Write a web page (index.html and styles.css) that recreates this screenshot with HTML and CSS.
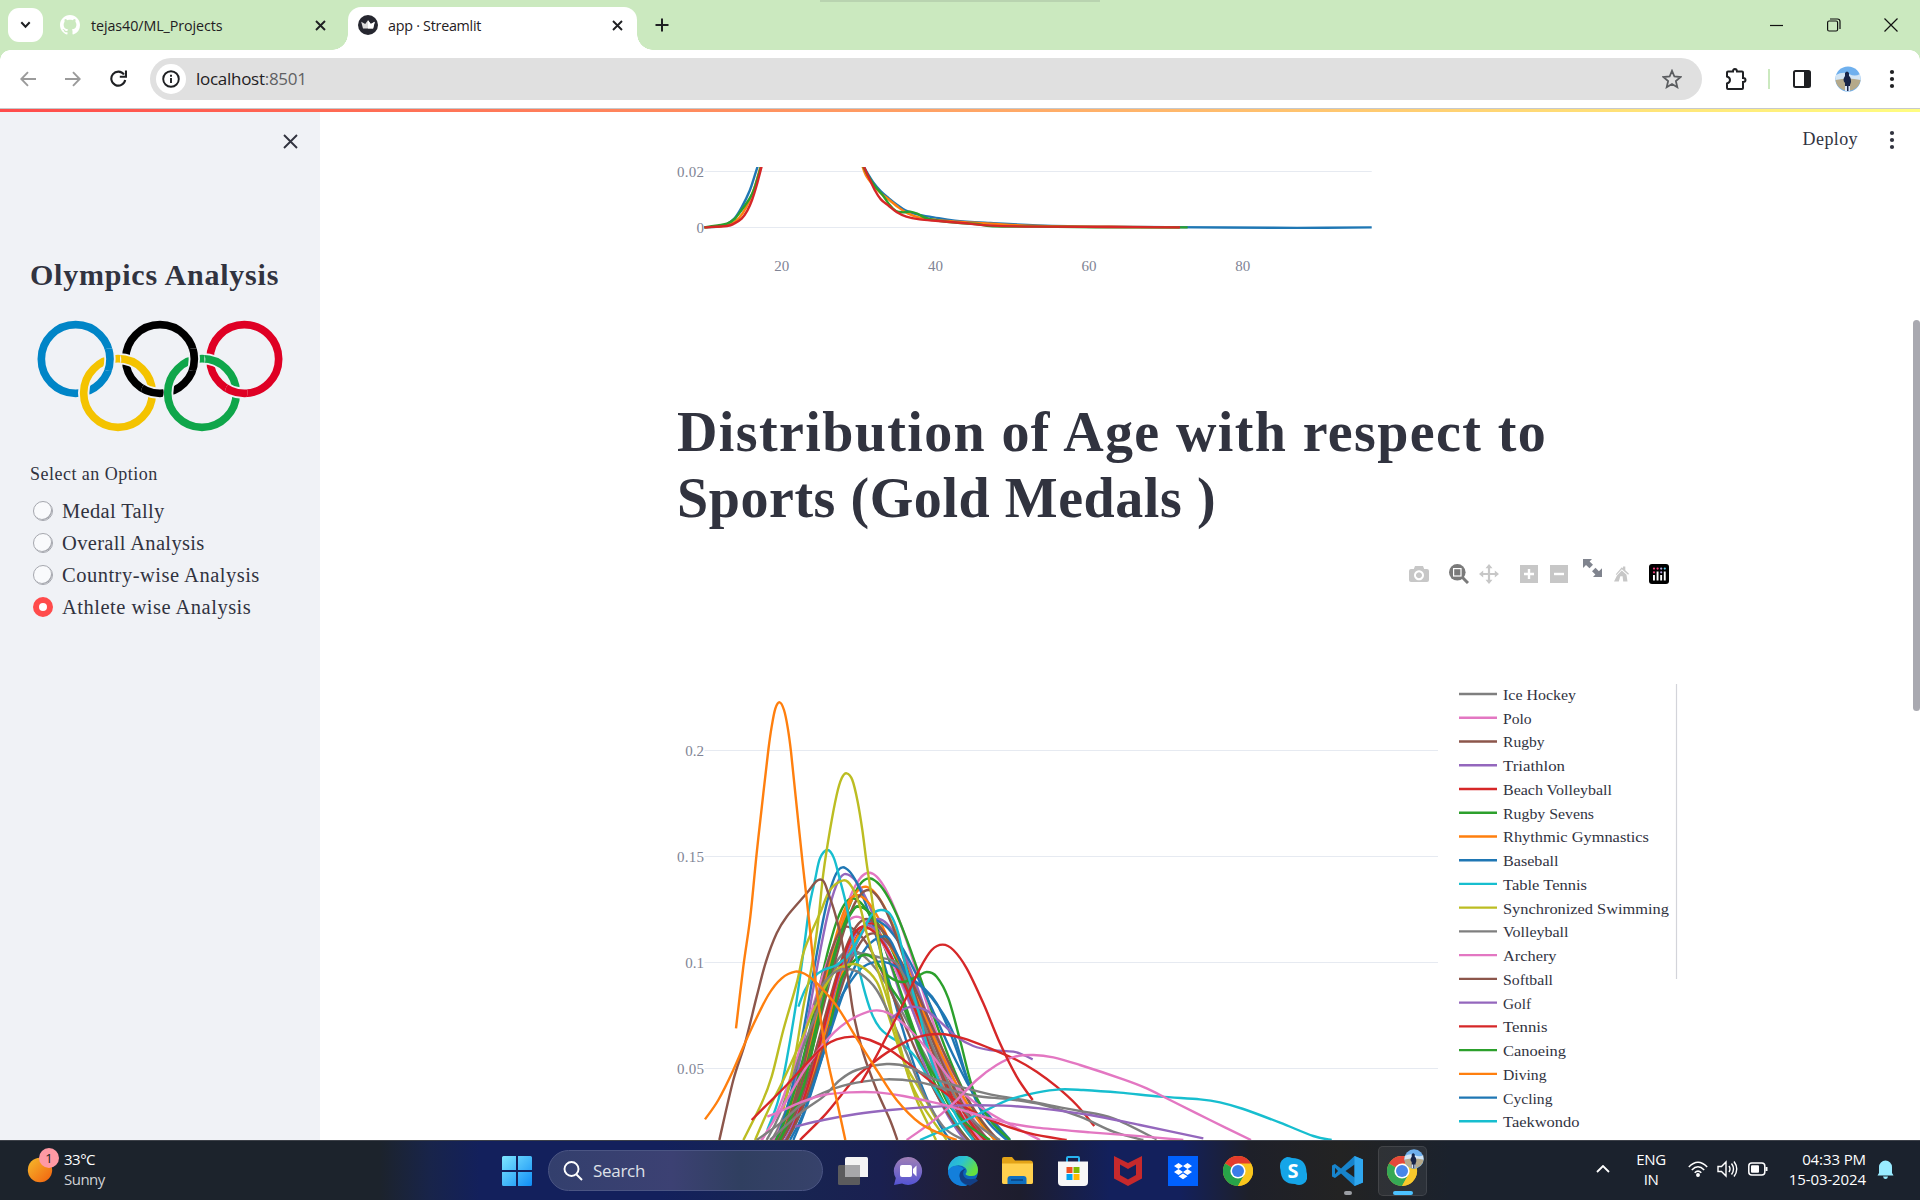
FILE: index.html
```html
<!DOCTYPE html>
<html lang="en">
<head>
<meta charset="utf-8">
<title>app · Streamlit</title>
<link rel="stylesheet" href="styles.css">
</head>
<body>
<svg class="defs" width="0" height="0">
  <defs>
    <g id="x"><path d="M1 1 10 10M10 1 1 10" fill="none" stroke="currentColor" stroke-width="1.9"/></g>
    <g id="dots" fill="currentColor"><circle cx="3" cy="3" r="2.1"/><circle cx="3" cy="10" r="2.1"/><circle cx="3" cy="17" r="2.1"/></g>
    <g id="photo"><circle cx="13" cy="13" r="12.6" fill="#6fb0ee"/><path d="M1 9Q8 5 14 8T25 8L25.5 14H.5z" fill="#d3e5f4"/><path d="M.5 14Q13 11 25.5 14A12.6 12.6 0 0 1 .5 14z" fill="#b5a98a"/><path d="M10 7q2-3 4 0v3q2 1 2 6l-1 3v6h-5v-8q-3-3 0-7z" fill="#172448"/><path d="M10 20h2v5h-2zM13.5 20h1.5v5h-1.5z" fill="#dce7f7"/></g>
    <g id="chrome"><circle cx="15" cy="15" r="15" fill="#f9bc15"/><path d="M15 15 2 7.5A15 15 0 0 1 28 7.500z" fill="#e43b2c"/><path d="M15 15 2 7.500A15 15 0 0 0 15 30L21.500 18.500z" fill="#27a349"/><path d="M15 7.500H28A15 15 0 0 1 15 30L21.500 18.500z" fill="#f9c51d"/><circle cx="15" cy="15" r="7.600" fill="#fff"/><circle cx="15" cy="15" r="6" fill="#3b7de8"/></g>
  </defs>
</svg>

<header class="tabs">
  <button class="tab-search"><svg width="11" height="8" viewBox="0 0 11 8"><path d="M1.300 1.300 5.500 5.800 9.700 1.300" fill="none" stroke="#1f2023" stroke-width="2"/></svg></button>
  <div class="tab idle">
    <svg width="20" height="20" viewBox="0 0 16 16"><path fill="#fff" d="M8 0C3.580 0 0 3.580 0 8c0 3.540 2.290 6.530 5.470 7.590.4.070.550-.170.550-.380 0-.190-.010-.820-.010-1.490-2.010.370-2.530-.490-2.690-.940-.090-.230-.480-.940-.820-1.130-.280-.150-.680-.520-.010-.530.630-.010 1.080.580 1.230.820.720 1.210 1.870.870 2.330.660.070-.520.280-.870.510-1.070-1.780-.2-3.640-.890-3.640-3.950 0-.870.310-1.590.820-2.150-.080-.2-.360-1.020.080-2.120 0 0 .670-.210 2.200.820.640-.180 1.320-.270 2-.270s1.360.090 2 .270c1.530-1.040 2.200-.820 2.200-.820.440 1.100.160 1.920.080 2.120.510.560.820 1.270.820 2.150 0 3.070-1.870 3.750-3.650 3.950.290.250.540.730.540 1.480 0 1.070-.010 1.930-.010 2.200 0 .210.150.460.550.380A8.010 8.010 0 0 0 16 8c0-4.420-3.580-8-8-8z"/></svg>
    <span class="tab-name">tejas40/ML_Projects</span>
    <svg class="shut" width="11" height="11"><use href="#x"/></svg>
  </div>
  <div class="tab active">
    <svg width="20" height="20" viewBox="0 0 20 20"><circle cx="10" cy="10" r="10" fill="#262730"/><path d="M3.200 6.700 7.200 9 10 5.300 12.800 9l4-2.300-1.700 6.700H5z" fill="#ddd"/><path d="M10 5.300 12.800 9l4-2.300-1.700 6.700H10z" fill="#fff"/></svg>
    <span class="tab-name">app · Streamlit</span>
    <svg class="shut" width="11" height="11"><use href="#x"/></svg>
  </div>
  <svg class="plus" width="14" height="14"><path d="M7 .5v13M.5 7h13" stroke="#1f2023" stroke-width="2"/></svg>
  <div class="strip"></div>
  <div class="win">
    <svg width="14" height="14"><path d="M0 7.500h13" stroke="#111" stroke-width="1.200"/></svg>
    <svg width="14" height="14" fill="none" stroke="#111" stroke-width="1.200"><rect x=".6" y="3" width="10" height="10" rx="1.500"/><path d="M3 1h7.500q2.500 0 2.500 2.500V11"/></svg>
    <svg width="14" height="14"><path d="M.5.5l13 13M13.500.5l-13 13" stroke="#111" stroke-width="1.200"/></svg>
  </div>
</header>

<nav class="toolbar">
  <div class="nav-buttons">
    <svg width="16" height="16" fill="none" stroke="#9b9b9b" stroke-width="1.900"><path d="M16 8H1.500M8 1.200 1.300 8 8 14.800"/></svg>
    <svg width="16" height="16" fill="none" stroke="#9b9b9b" stroke-width="1.900"><path d="M0 8h14.500M8 1.200 14.700 8 8 14.800"/></svg>
    <svg width="17" height="17" fill="none" stroke="#1f2023" stroke-width="2.100"><path d="M14 4.500A7 7 0 1 0 15.200 10"/><path d="M16 .5v6.300H9.800" /></svg>
  </div>
  <div class="omnibox">
    <span class="info"><svg width="18" height="18" fill="none" stroke="#1f2023" stroke-width="1.900"><circle cx="9" cy="9" r="7.800"/><path d="M9 8v5M9 4.800v2"/></svg></span>
    <span class="url">localhost<i>:8501</i></span>
    <svg class="star" width="20" height="20" viewBox="0 0 20 20"><path d="M10 1.800l2.400 5.700 6.200.5-4.700 4.100 1.400 6.100L10 15l-5.300 3.200 1.400-6.100L1.400 8l6.200-.5z" fill="none" stroke="#5b5d60" stroke-width="1.800"/></svg>
  </div>
  <svg class="puzzle" width="22" height="22" viewBox="0 0 22 22"><path d="M2 4.500q0-1 1-1H8q0-2.500 1.900-2.500T12 3.500h5q1 0 1 1V10q2.500 0 2.500 2T18 14v6q0 1-1 1H3q-1 0-1-1v-4.500q3-1 3-3.500T2 8.500z" fill="none" stroke="#1f2023" stroke-width="2"/></svg>
  <span class="divider"></span>
  <svg class="panel" width="18" height="18"><rect x="1" y="1" width="16" height="16" rx="1.500" fill="none" stroke="#1f2023" stroke-width="2"/><path d="M11 1h6v16h-6z" fill="#1f2023"/></svg>
  <svg class="avatar" width="26" height="26"><use href="#photo"/></svg>
  <svg class="kebab" width="6" height="20"><use href="#dots"/></svg>
</nav>

<main class="app">
  <div class="decoration"></div>
  <aside class="sidebar">
    <svg class="collapse" width="15" height="15"><path d="M1 1l13 13M14 1 1 14" stroke="#31333f" stroke-width="1.900"/></svg>
    <h1>Olympics Analysis</h1>
    <svg class="rings" width="260" height="132" viewBox="90 222 780 396">
      <defs><clipPath id="over"><circle cx="330" cy="359" r="34"/><circle cx="457" cy="457" r="34"/><circle cx="582" cy="359" r="34"/><circle cx="709" cy="457" r="34"/></clipPath></defs>
      <g fill="none" stroke-width="23">
        <circle cx="227" cy="357" r="103" stroke="#0085c7"/><circle cx="480" cy="357" r="103" stroke="#000"/><circle cx="733" cy="357" r="103" stroke="#df0024"/>
        <circle cx="354" cy="459" r="103" class="halo"/><circle cx="606" cy="459" r="103" class="halo"/>
        <circle cx="354" cy="459" r="103" stroke="#f4c300"/><circle cx="606" cy="459" r="103" stroke="#0fa64a"/>
        <g clip-path="url(#over)">
          <circle cx="227" cy="357" r="103" class="halo"/><circle cx="733" cy="357" r="103" class="halo"/><circle cx="480" cy="357" r="103" class="halo"/>
          <circle cx="227" cy="357" r="103" stroke="#0085c7"/><circle cx="480" cy="357" r="103" stroke="#000"/><circle cx="733" cy="357" r="103" stroke="#df0024"/>
        </g>
      </g>
    </svg>
    <p class="radio-label">Select an Option</p>
    <ul class="radios">
      <li><span class="radio"></span>Medal Tally</li>
      <li><span class="radio"></span>Overall Analysis</li>
      <li class="loose"><span class="radio"></span>Country-wise Analysis</li>
      <li class="loose"><span class="radio on"></span>Athlete wise Analysis</li>
    </ul>
  </aside>
  <section class="content">
    <div class="app-menu"><span>Deploy</span><svg width="6" height="20"><use href="#dots"/></svg></div>
    <svg class="age-chart" width="1000" height="123" viewBox="677 167 1000 123">
      <defs><clipPath id="fold"><path d="M677 167h1000v123H677z"/></clipPath></defs>
      <path d="M704.500 171.500H1371.700M704.500 227.500H1371.700" class="grid"/>
      <g class="axis">
        <text x="704" y="177" text-anchor="end" textLength="27">0.02</text><text x="704" y="233" text-anchor="end">0</text>
        <text x="781.700" y="271" text-anchor="middle">20</text><text x="935.500" y="271" text-anchor="middle">40</text><text x="1089" y="271" text-anchor="middle">60</text><text x="1242.700" y="271" text-anchor="middle">80</text>
      </g>
      <g clip-path="url(#fold)"><g transform="translate(660 150) scale(.47194 .33333)" id="age-lines"></g></g>
    </svg>
    <h2><span>Distribution of Age with respect to</span> <span class="second">Sports (Gold Medals )</span></h2>
    <div class="modebar">
      <svg width="20" height="20" viewBox="0 0 20 20"><path fill="#c7c7c7" fill-rule="evenodd" d="M6 2h8l1.200 3H18q2 0 2 2v9q0 2-2 2H2q-2 0-2-2V7q0-2 2-2h2.800zM10 6.300a5 5 0 1 0 .010 0zM10 8.300a3 3 0 1 1-.010 0z"/></svg>
      <svg class="zoom" width="20" height="20" viewBox="0 0 20 20"><circle cx="8.300" cy="8.300" r="8.300" fill="#7a7a7a"/><path d="M13 13l6 6" stroke="#7a7a7a" stroke-width="3"/><rect x="4.600" y="4.600" width="7.400" height="7.400" fill="none" stroke="#fff" stroke-width="1.200"/></svg>
      <svg class="pan" width="20" height="20" viewBox="0 0 20 20"><path fill="#c7c7c7" d="M10 0l3.500 4.200h-2.400v4.700h4.700V6.500L20 10l-4.200 3.500v-2.400h-4.700v4.700h2.400L10 20l-3.500-4.200h2.400v-4.700H4.200v2.400L0 10l4.200-3.500v2.400h4.700V4.200H6.500z"/></svg>
      <svg class="in" width="18" height="18"><path fill="#c7c7c7" d="M0 0h18v18H0z"/><path d="M9 4v10M4 9h10" stroke="#fff" stroke-width="2.400"/></svg>
      <svg class="out" width="18" height="18"><path fill="#c7c7c7" d="M0 0h18v18H0z"/><path d="M4 9h10" stroke="#fff" stroke-width="2.400"/></svg>
      <svg class="full" width="19" height="18"><path fill="#80848e" d="M0 0h9L6.600 2.400 10 5.800 6.500 9.300 3 5.900 0 9zM19 18h-9l2.400-2.400L9 12.200l3.500-3.500 3.400 3.500L19 9.300z"/></svg>
      <svg class="home" width="15" height="16"><path fill="#c7c7c7" d="M7.800 1.200 9 2.300V.5h2.300v3.800L15 7.800l-.9 1L7.800 3.200 2.500 9 1.800 8.200zM3 9.500 7.800 4.500l4.700 4.200L13.500 15.500H9.200l-.6-5.300H6.300L4.800 15.500H0z"/></svg>
      <svg class="plotly" width="20" height="20"><rect width="20" height="20" rx="3"/><g fill="#fff"><rect x="4" y="11" width="1.900" height="5.500"/><rect x="7.600" y="7.500" width="1.900" height="9"/><rect x="11.200" y="11" width="1.900" height="5.500"/><rect x="14.800" y="7.500" width="1.900" height="9"/></g><g fill="#f4407d"><circle cx="5" cy="4.600" r="1.100"/><circle cx="5" cy="8.300" r="1.100"/><circle cx="8.600" cy="4.600" r="1.100"/></g><g fill="#b9a7e0"><circle cx="12.200" cy="4.600" r="1.100"/><circle cx="12.200" cy="8.300" r="1.100"/></g><circle cx="15.800" cy="4.600" r="1.100" fill="#5ad0f0"/></svg>
    </div>
    <svg class="sport-chart" width="1010" height="545" viewBox="677 595 1010 545">
      <path d="M704.500 750.500H1438M704.500 856.500H1438M704.500 962.500H1438M704.500 1068.500H1438" class="grid"/>
      <g class="axis">
        <text x="704" y="756" text-anchor="end">0.2</text><text x="704" y="862" text-anchor="end" textLength="27">0.15</text><text x="704" y="968" text-anchor="end">0.1</text><text x="704" y="1074" text-anchor="end" textLength="27">0.05</text>
      </g>
      <g transform="translate(690 900) scale(.33333)" id="sport-lines"></g>
      <g id="legend"></g>
      <path d="M1676.500 684v295" stroke="#d3d4da" stroke-width="1.200"/>
    </svg>
    <div class="scrollbar"></div>
  </section>
</main>

<footer class="taskbar">
  <div class="weather">
    <svg width="34" height="36" viewBox="0 0 34 36"><defs><linearGradient id="sun" x1="0" y1="0" x2="1" y2="1"><stop stop-color="#f5bb2b"/><stop offset="1" stop-color="#f2600f"/></linearGradient></defs><circle cx="13" cy="22" r="12.200" fill="url(#sun)"/><circle cx="22" cy="10" r="10" fill="#ff99a4"/><text x="22" y="15" text-anchor="middle" class="badge">1</text></svg>
    <div><b>33°C</b><span>Sunny</span></div>
  </div>
  <div class="apps">
    <div class="cell"><svg width="30" height="30"><defs><linearGradient id="win" x1="0" y1="0" x2="1" y2="1"><stop stop-color="#7ee6ff"/><stop offset="1" stop-color="#0f8df5"/></linearGradient></defs><path d="M1.500 0H14v14H0V1.500Q0 0 1.500 0zM16 0h12.500Q30 0 30 1.500V14H16zM0 16h14v14H1.500Q0 30 0 28.500zM16 16h14v12.500q0 1.500-1.500 1.500H16z" fill="url(#win)"/></svg></div>
    <div class="search"><svg width="20" height="20" fill="none" stroke="#fff" stroke-width="1.900"><circle cx="8.500" cy="8" r="7"/><path d="M13.500 13.500 19 19"/></svg>Search</div>
    <div class="cell"><svg width="30" height="28"><path d="M9 0h19.500Q30 0 30 1.500V20H7V2q0-2 2-2z" fill="#f4f4f4"/><rect y="8" width="22" height="20" rx="1.500" fill="#5b5b5d"/><path d="M7 8h15v12H7z" fill="#a7a7aa"/></svg></div>
    <div class="cell"><svg width="30" height="30"><defs><linearGradient id="chat" x1="0" y1="0" x2="0" y2="1"><stop stop-color="#a07fb5"/><stop offset="1" stop-color="#5454d4"/></linearGradient></defs><path d="M15 1A14 14 0 1 1 9 27.600L1 29l1.800-7A14 14 0 0 1 15 1z" fill="url(#chat)"/><rect x="7" y="9" width="12" height="12" rx="2" fill="#fff"/><path d="M20 13l3.500-3.500v11L20 17z" fill="#fff"/></svg></div>
    <div class="cell"><svg width="30" height="30" viewBox="0 0 30 30"><defs><linearGradient id="edge" x1="0" y1="0" x2="1" y2=".5"><stop stop-color="#24a6e5"/><stop offset=".5" stop-color="#2cc3cf"/><stop offset="1" stop-color="#65e03f"/></linearGradient></defs><circle cx="15" cy="15" r="15" fill="#0b66b9"/><path d="M0 15A15 15 0 0 1 30 14q0 6-6.500 6-5 0-6-2 2.500-3 0-6Q13 8 7 10 1.500 12 0 15z" fill="url(#edge)"/><path d="M0 15Q3 9 10 10q5 .5 6 4-5 1-4.500 6.500Q12.500 28 19 29.400A15 15 0 0 1 0 15z" fill="#137fdb"/><path d="M17.500 13q-3 2-2.200 6 2 6 12.500 3.500l2.200 2.200-8 5Q12 28 11.500 20q0-5 4.500-7z" fill="#123f86"/></svg></div>
    <div class="cell"><svg width="31" height="28"><path d="M0 2Q0 0 2 0h8l3 3.500h15q3 0 3 3V25q0 2-2 2H2q-2 0-2-2z" fill="#e3a317"/><path d="M0 6.500h31V25q0 2-2 2H2q-2 0-2-2z" fill="#ffd04e"/><path d="M5.500 27v-5q0-3 3-3h13q3 0 3 3v5z" fill="#0f6fc0"/><path d="M9 23h12" stroke="#0a4d90" stroke-width="2"/></svg></div>
    <div class="cell"><svg width="30" height="30"><path d="M9 6V2q0-1 1-1h10q1 0 1 1v4" fill="none" stroke="#27b3f0" stroke-width="2"/><path d="M0 5.500h30V26q0 4-4 4H4q-4 0-4-4z" fill="#f7f7f7"/><path fill="#f25022" d="M8.500 11h6v6h-6z"/><path fill="#7fba00" d="M15.500 11h6v6h-6z"/><path fill="#00a4ef" d="M8.500 18h6v6h-6z"/><path fill="#ffb900" d="M15.500 18h6v6h-6z"/></svg></div>
    <div class="cell"><svg width="28" height="30"><path d="M0 0 14 7 28 0V22.500L14 30 0 22.500zM6 8.500V19l8 4.500 8-4.500V8.500l-8 4.500z" fill="#c6292c" fill-rule="evenodd"/></svg></div>
    <div class="cell"><svg width="30" height="30"><path d="M0 0h30v30H0z" fill="#0061fe"/><path fill="#fff" d="M10.500 7 15 10l-4.500 3L6 10zM19.500 7l4.500 3-4.500 3-4.500-3zM10.500 13l4.500 3-4.500 3L6 16zM19.500 13l4.500 3-4.500 3-4.500-3zM15 17.500l4.500 2.800-4.500 2.900-4.500-2.900z"/></svg></div>
    <div class="cell"><svg width="30" height="30"><use href="#chrome"/></svg></div>
    <div class="cell"><svg width="28" height="28"><path d="M8 0Q11 0 13 1 27 1 27.500 15 30 24 24 27q-4 2-8 0Q2 27 1.500 13-1 3 8 0z" fill="#15a5e8"/><text x="14" y="21" text-anchor="middle" class="skype">S</text></svg></div>
    <div class="cell"><svg width="31" height="30"><path d="M22.500 0 31 3.500v23L22.500 30 9 17.500 3 22 0 20.500v-11L3 8l6 4.500zM22.500 8.500 13.500 15l9 6.500zM3 11.800v6.400L6 15z" fill="#1784cc" fill-rule="evenodd"/><path d="M22.500 0 31 3.500v23L22.500 30z" fill="#2fa7ef"/></svg><i class="dot"></i></div>
    <div class="cell current"><svg width="31" height="30"><use href="#chrome"/></svg><svg class="profile" width="20" height="20" viewBox="0 0 26 26"><use href="#photo"/></svg><i class="bar"></i></div>
  </div>
  <div class="tray">
    <svg class="up" width="14" height="8"><path d="M1 7 7 1l6 6" fill="none" stroke="#fff" stroke-width="1.800"/></svg>
    <div class="lang">ENG<br>IN</div>
    <svg class="wifi" width="20" height="16" fill="none" stroke="#fff" stroke-width="1.500"><path d="M.8 6Q10-3.500 19.200 6M3.800 9Q10 2.500 16.200 9M6.700 11.800Q10 8.500 13.300 11.800"/><circle cx="10" cy="14" r="1.200" fill="#fff"/></svg>
    <svg class="vol" width="21" height="18" fill="none" stroke="#fff" stroke-width="1.400"><path d="M1 6.500h3.500L9 2v14l-4.500-4.500H1zM12 6q2 3 0 6M14.500 3.500q4 5.500 0 11M17 1.500q5.500 7.500 0 15"/></svg>
    <svg class="battery" width="20" height="14"><rect x=".8" y="1" width="16" height="12" rx="3" fill="none" stroke="#fff" stroke-width="1.500"/><rect x="3" y="3.200" width="8" height="7.600" rx="1" fill="#fff"/><path d="M17.500 5h2v4h-2z" fill="#fff"/></svg>
    <div class="clock">04:33 PM<br>15-03-2024</div>
    <svg class="bell" width="17" height="19"><path d="M2 13V7a6.500 6.500 0 0 1 13 0v6l1.500 2.500H.5z" fill="#99ebff"/><path d="M6 16.500h5q-.5 2.500-2.500 2.500T6 16.500z" fill="#99ebff"/></svg>
  </div>
</footer>
<script src="charts.js"></script>
</body>
</html>
```
FILE: styles.css
```css
* { box-sizing: border-box; }
body { margin: 0; width: 1920px; height: 1200px; overflow: hidden; display: flex; flex-direction: column; background: #fff; font-family: "Open Sans", "Noto Sans", sans-serif; color: #1f2023; }
svg { display: block; flex: none; }
.defs { position: absolute; }
button { border: 0; padding: 0; }

.tabs { height: 50px; background: #cbe9bf; display: flex; align-items: flex-start; padding: 8px 0 0 8px; position: relative; flex: none; }
.tab-search { width: 35px; height: 34px; border-radius: 11px; background: #fff; display: flex; align-items: center; justify-content: center; }
.tab { display: flex; align-items: center; font-size: 14.300px; letter-spacing: -.08px; height: 34px; }
.tab .shut { margin-left: auto; }
.tab-name { margin-left: 11px; white-space: nowrap; position: relative; }
.idle { width: 266px; margin-left: 17px; }
.active { width: 289px; height: 43px; margin: -1px 0 0 22px; padding: 0 14px 7px 10px; background: #fff; border-radius: 13px 13px 0 0; position: relative; }
.active .tab-name { margin-left: 10px; letter-spacing: -.25px; }
.active::before, .active::after { content: ""; position: absolute; bottom: 0; width: 16px; height: 16px; }
.active::before { left: -16px; background: radial-gradient(circle at 0 0, transparent 15.500px, #fff 16px); }
.active::after { right: -16px; background: radial-gradient(circle at 100% 0, transparent 15.500px, #fff 16px); }
.plus { margin: 10px 0 0 18px; }
.strip { position: absolute; left: 820px; top: 0; width: 280px; height: 2px; background: #b9d3b0; }
.win { margin: 10px 22px 0 auto; display: flex; gap: 43px; }

.toolbar { height: 59px; flex: none; display: flex; align-items: center; padding: 0 25px 1px 20px; background: #fff; border-bottom: 1px solid #c6c9cc; position: relative; }
.toolbar::before, .toolbar::after { content: ""; position: absolute; top: 0; width: 10px; height: 10px; }
.toolbar::before { left: 0; background: radial-gradient(circle at 100% 100%, transparent 9.500px, #cbe9bf 10px); }
.toolbar::after { right: 0; background: radial-gradient(circle at 0 100%, transparent 9.500px, #cbe9bf 10px); }
.nav-buttons { display: flex; align-items: center; gap: 29px; width: 130px; }
.omnibox { width: 1552px; height: 42px; border-radius: 21px; background: #e0e0e0; display: flex; align-items: center; padding: 0 20px 0 6px; }
.info { width: 30px; height: 30px; border-radius: 50%; background: #fff; display: flex; align-items: center; justify-content: center; }
.url { margin-left: 10px; font-size: 17px; letter-spacing: -.28px; }
.url i { font-style: normal; color: #5f6163; }
.star { margin-left: auto; }
.puzzle { margin-left: 23px; }
.divider { width: 2px; height: 20px; background: #cbe9bf; margin-left: 21px; }
.panel { margin-left: 23px; }
.avatar { margin-left: 24px; }
.kebab { margin-left: auto; }

.app { flex: none; height: 1031px; display: flex; position: relative; overflow: hidden; font-family: "Liberation Serif", serif; color: #31333f; }
.decoration { position: absolute; left: 0; right: 0; top: 0; height: 3px; background: linear-gradient(90deg, #ff4b4b, #fffd80); z-index: 2; }
.sidebar { width: 320px; background: #f0f2f6; flex: none; padding: 25px 30px 0; }
.collapse { margin-left: 253px; }
.sidebar h1 { margin: 108px 0 22px; font-size: 30px; line-height: 36px; letter-spacing: .78px; white-space: nowrap; }
.rings { margin-top: -1px; }
.halo { stroke: #f0f2f6; stroke-width: 34; }
.radio-label { margin: 17px 0 10px; font-size: 18px; line-height: 22px; letter-spacing: .48px; }
.radios { list-style: none; margin: 0; padding: 0 0 0 3px; font-size: 20.500px; letter-spacing: .34px; }
.radios li { height: 32px; display: flex; align-items: center; gap: 9px; white-space: nowrap; }
.radios .loose { letter-spacing: .5px; }
.radio { width: 20px; height: 20px; border-radius: 50%; background: #f9fafc; border: 1px solid #a5a7ae; box-shadow: inset -1px -1px 0 #a5a7ae; }
.radio.on { border: 6.500px solid #ff4b4b; background: #fff; box-shadow: none; }

.content { flex: none; width: 1600px; padding: 58px 0 0 357px; position: relative; }
.app-menu { position: absolute; right: 25px; top: 20px; display: flex; align-items: center; gap: 31px; font-size: 18px; letter-spacing: .4px; }
.age-chart { overflow: visible; }
.content h2 { margin: 109px 0 0; font-size: 56px; line-height: 66px; letter-spacing: 1.380px; width: 920px; }
.second { letter-spacing: .56px; }
.grid { stroke: #e6eaf1; stroke-width: 1.200; }
.axis { font: 15px "Liberation Serif", serif; fill: #808495; }
.legend-name { font: 15.500px "Liberation Serif", serif; fill: #31333f; }
.line { fill: none; stroke-width: 2.400; vector-effect: non-scaling-stroke; }
.modebar { display: flex; align-items: flex-start; height: 64px; padding: 33px 0 0 732px; }
.zoom, .plotly { margin-left: 20px; }
.pan { margin-left: 10px; }
.in { margin: 1px 0 0 21px; }
.out { margin: 1px 0 0 12px; }
.full { margin: -5px 0 0 15px; }
.home { margin: 2px 0 0 12px; }
.scrollbar { position: absolute; right: 0; top: 211px; width: 7px; height: 391px; border-radius: 4px; background: #a9a9b0; }

.taskbar { height: 60px; flex: none; display: flex; position: relative; color: #fff; font-size: 15px; line-height: 20px; border-top: 1px solid #3d4149; background: linear-gradient(90deg, #1c232c 0 380px, #18244a 430px, #13205c 480px 660px, #172552 780px, #1a2050 880px, #221f35 960px, #1d1d2d 1020px, #13205c 1110px 1180px, #1e2029 1250px, #232323 1340px, #1b222d 1450px); }
.weather { display: flex; width: 489px; padding: 7px 0 0 27px; gap: 3px; }
.weather div { display: flex; flex-direction: column; padding-top: 1px; letter-spacing: -.5px; }
.weather b { font-weight: 400; }
.weather span { color: #d0d2d6; }
.badge { font: 13px "Open Sans", sans-serif; fill: #222; }
.skype { font: bold 20px "Open Sans", sans-serif; fill: #fff; }
.apps { display: flex; align-items: center; padding-bottom: 0; }
.cell { width: 55px; height: 50px; display: flex; align-items: center; justify-content: center; position: relative; }
.search { width: 275px; height: 41px; border-radius: 21px; border: 1px solid #4b5583; background: linear-gradient(90deg, #333f6d, #3c4173 45%, #303f60 70%, #37426b); margin: 0 2px 0 4px; display: flex; align-items: center; gap: 10px; padding-left: 14px; font-size: 17px; letter-spacing: -.3px; color: #dfe1e8; }
.current::before { content: ""; position: absolute; inset: 0 3px; border-radius: 5px; background: #ffffff12; border: 1px solid #ffffff18; }
.profile { position: absolute; right: 6px; top: 3px; }
.dot, .bar { position: absolute; bottom: 1px; height: 4px; border-radius: 2px; }
.dot { width: 8px; background: #9b9ea3; }
.bar { width: 20px; background: #4cc2ff; }
.tray { position: absolute; right: 26px; top: 8px; height: 40px; display: flex; align-items: center; text-align: center; letter-spacing: -.4px; }
.lang { width: 40px; margin-left: 21px; }
.wifi { margin-left: 17px; }
.vol { margin-left: 9px; }
.battery { margin-left: 10px; }
.clock { width: 98px; text-align: right; letter-spacing: -.1px; }
.bell { margin-left: 11px; }
```
FILE: charts.js
```js
const C = { b: '#1f77b4', o: '#ff7f0e', g: '#2ca02c', r: '#d62728', p: '#9467bd', n: '#8c564b', k: '#e377c2', y: '#7f7f7f', l: '#bcbd22', c: '#17becf' };
const NS = 'http://www.w3.org/2000/svg';

function draw(host, color, pts) {
  let d = `M${pts[0]}`;
  for (let i = 0; i < pts.length - 1; i++) {
    const a = pts[i - 1] || pts[i], b = pts[i], c = pts[i + 1], e = pts[i + 2] || c;
    d += `C${b[0] + (c[0] - a[0]) / 6},${b[1] + (c[1] - a[1]) / 6} ${c[0] - (e[0] - b[0]) / 6},${c[1] - (e[1] - b[1]) / 6} ${c[0]},${c[1]}`;
  }
  const p = document.createElementNS(NS, 'path');
  p.setAttribute('d', d);
  p.setAttribute('class', 'line');
  p.setAttribute('stroke', C[color]);
  host.appendChild(p);
}
const parse = s => s.split(' ').map(v => v.split(',').map(Number));

// Bell-shaped density: peak position, then where each flank reaches the fold.
// The right flank has a longer tail than the left one.
function bell(px, py, left, right) {
  const h = 823 - py, k = Math.log(h / 103), out = [];
  for (let x = left - 10; x <= right + 50; x += 10) {
    const t = x < px ? ((px - x) / (px - left)) ** 2 : ((x - px) / (right + 35 - px)) ** 1.85;
    out.push([x, 823 - h * Math.exp(-k * t)]);
  }
  return out;
}

const age = document.getElementById('age-lines');
[['b', '94,232 125,230 142,222 158,205 173,172 190,122 200,80 209,40'],
 ['b', '428,40 437,63 452,97 468,124 485,145 502,164 520,181 545,193 580,202 625,212 700,219 800,226 950,230 1200,232.500 1350,233.500 1508,232'],
 ['o', '94,232 140,227 160,214 175,190 190,150 202,105 215,40'],
 ['o', '427,40 436,75 450,103 468,130 486,150 505,172 525,190 550,203 600,212 700,221 800,228 1000,231 1100,232'],
 ['g', '94,232 122,226 142,221 158,207 173,180 190,145 200,115 215,45'],
 ['g', '428,40 438,70 455,108 470,132 485,162 500,183 515,187 530,185 545,191 570,207 625,218 670,222 705,229 800,230 950,232 1118,232'],
 ['r', '94,232 142,228 158,220 173,206 185,182 195,150 205,105 217,40'],
 ['r', '429,40 440,75 455,120 468,148 485,168 502,187 522,200 550,208 590,213 640,219 705,227 800,230 950,231 1102,232']
].forEach(([c, s]) => draw(age, c, parse(s)));

const sport = document.getElementById('sport-lines');
[['y', 480, 150, 245, 850], ['k', 537, -82, 250, 860], ['g', 537, -65, 262, 880], ['o', 525, -40, 258, 850],
 ['p', 466, -78, 262, 790], ['b', 458, -98, 258, 745], ['g', 487, -5, 258, 800], ['o', 500, -15, 275, 830],
 ['k', 500, 50, 215, 840], ['g', 505, 20, 270, 850], ['p', 565, 57, 275, 850], ['b', 550, 60, 290, 920],
 ['r', 545, 70, 275, 830], ['o', 535, 85, 290, 880], ['p', 530, 75, 285, 815], ['n', 530, 57, 275, 860],
 ['n', 470, 80, 270, 800], ['r', 520, 80, 290, 850], ['n', 548, 100, 290, 890], ['n', 535, -30, 265, 820]
].forEach(([c, ...a]) => draw(sport, c, bell(...a)));

[['b', '300,720 340,640 400,460 445,310 485,240 520,200 570,185 620,200 660,233 700,263 740,310 785,410 840,560 890,660 950,720'],
 ['b', '310,720 350,620 410,430 460,280 500,190 540,130 590,110 620,160 650,225 700,265 745,320 790,400 850,580 960,720'],
 ['y', '230,720 270,640 340,440 400,290 440,200 480,170 515,160 570,173 620,190 660,270 720,420 800,600 870,680 930,720'],
 ['g', '420,378 435,310 455,235 485,190 520,165 550,175 580,215 610,238 640,246 680,230 710,216 740,230 775,295 810,420 850,570 900,660 960,720'],
 ['g', '270,720 340,560 400,300 450,110 490,30 510,20 540,40 560,85 590,235 640,320 690,450 740,540 780,620 840,680 900,720'],
 ['c', '232,690 265,600 290,480 320,300 345,120 358,20 375,-60 390,-125 413,-150 432,-125 450,-60 470,20 490,130 520,260 545,340 570,385 600,410 640,435 680,475 730,560 800,670'],
 ['c', '325,320 345,270 370,232 400,210 440,195 480,160 520,90 545,45 572,30 600,42 625,100 650,210 690,350 730,500 800,650 850,720'],
 ['l', '160,720 215,610 245,530 280,390 320,250 340,160 365,95 390,40 420,-30 460,-59 485,-40 510,20 530,100 560,200 590,290 620,400 660,540 700,620 770,720'],
 ['l', '195,720 235,630 280,540 330,430 380,310 430,220 470,195 510,197 560,245 590,330 640,480 690,570 740,660'],
 ['y', '372,315 395,260 430,220 470,207 510,220 560,270 610,370 650,460 700,580 760,680 820,720'],
 ['l', '280,630 315,470 340,320 365,200 385,60 400,-80 420,-210 440,-315 455,-365 470,-380 487,-360 503,-295 517,-210 530,-110 545,-10 555,60 570,150 590,260 610,360 640,480 680,600 738,720'],
 ['n', '88,720 130,540 165,430 200,290 228,185 260,100 290,50 350,-20 380,-57 400,-57 415,-20 435,40 455,120 475,240 492,350 520,460 560,570 600,660 622,720'],
 ['k', '215,720 290,600 350,500 420,410 480,360 550,332 600,342 660,390 730,470 800,560 900,640 1050,720'],
 ['p', '605,355 640,328 670,320 710,332 750,365 800,410 850,438 900,450 970,455 1000,465 1028,478'],
 ['r', '185,660 230,615 290,555 350,490 400,440 440,418 490,410 540,420 600,450 680,510 760,575 840,630 920,668 1020,700 1130,720'],
 ['r', '330,720 400,650 450,590 500,530 560,480 620,440 680,412 750,402 820,415 900,445 980,480 1040,515 1100,560 1160,615 1213,678'],
 ['y', '200,720 270,670 340,610 420,570 500,548 590,538 680,545 770,567 860,588 960,598 1060,615 1170,650 1270,695 1360,720'],
 ['y', '240,720 330,640 400,590 450,540 500,510 590,492 660,502 740,540 840,568 920,587 1000,600 1100,620 1170,633 1270,655 1400,718'],
 ['c', '690,720 760,690 830,660 900,625 960,598 1040,578 1110,568 1180,570 1290,578 1410,590 1530,598 1590,607 1660,627 1770,668 1870,708 1925,720'],
 ['p', '315,680 400,660 500,642 600,630 700,622 820,616 940,617 1050,625 1200,645 1350,675 1540,715'],
 ['k', '232,650 280,630 330,608 400,585 480,577 560,577 640,588 720,605 800,625 880,650 960,670 1040,683 1200,697 1330,707 1480,720'],
 ['k', '650,720 720,670 790,610 860,540 920,495 975,470 1030,465 1090,472 1170,495 1300,538 1370,565 1440,600 1560,660 1683,720'],
 ['r', '513,548 550,485 600,390 650,290 690,205 725,150 758,134 790,150 830,205 880,310 930,430 980,530 1028,600'],
 ['o', '45,658 85,600 130,510 180,395 235,285 275,235 316,215 345,222 370,240 400,270 445,325 500,415 560,510 620,600 690,670 760,705 800,720'],
 ['o', '138,385 160,200 181,50 200,-140 220,-320 235,-450 245,-520 256,-574 269,-593 282,-570 293,-518 303,-445 317,-310 338,-110 357,60 375,230 405,440 440,600 466,720']
].forEach(([c, s]) => draw(sport, c, parse(s)));

const legend = document.getElementById('legend');
[['y', 'Ice Hockey', 73], ['k', 'Polo', 28.7], ['n', 'Rugby', 41.5], ['p', 'Triathlon', 62], ['r', 'Beach Volleyball', 109],
 ['g', 'Rugby Sevens', 91], ['o', 'Rhythmic Gymnastics', 146], ['b', 'Baseball', 55.5], ['c', 'Table Tennis', 84],
 ['l', 'Synchronized Swimming', 166], ['y', 'Volleyball', 65.5], ['k', 'Archery', 53.5], ['n', 'Softball', 50],
 ['p', 'Golf', 28], ['r', 'Tennis', 44.5], ['g', 'Canoeing', 63], ['o', 'Diving', 43.5], ['b', 'Cycling', 49.5], ['c', 'Taekwondo', 76.5]
].forEach(([c, name, w], i) => {
  const y = 694 + i * 23.74;
  legend.insertAdjacentHTML('beforeend',
    `<path class="line" stroke="${C[c]}" d="M1459 ${y}h38"/><text class="legend-name" x="1503" y="${y + 6}" textLength="${w}" lengthAdjust="spacingAndGlyphs">${name}</text>`);
});
```
